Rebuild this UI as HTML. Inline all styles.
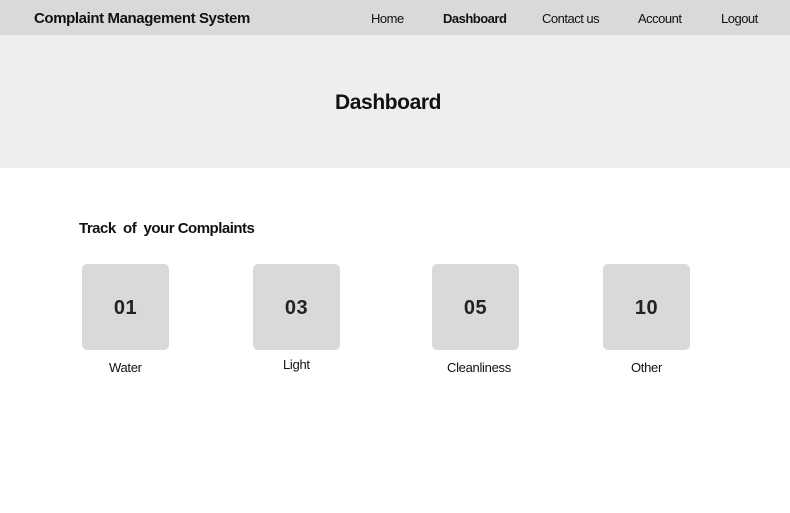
<!DOCTYPE html>
<html><head><style>
*{margin:0;padding:0;box-sizing:border-box}
body{width:790px;height:513px;background:#fff;font-family:"Liberation Sans",sans-serif;color:#111;position:relative;overflow:hidden}
.a{position:absolute;white-space:nowrap}
.hdr{position:absolute;left:0;top:0;width:790px;height:35px;background:#d9d9d9}
.hero{position:absolute;left:0;top:35px;width:790px;height:133px;background:#eeeeee}
.nav{font-size:13px;top:11px;letter-spacing:-0.5px}
.box{position:absolute;top:264px;width:87px;height:86px;background:#d9d9d9;border-radius:5px;font-size:20px;font-weight:bold;text-align:center;line-height:88px;letter-spacing:0.5px;color:#222}
.lbl{font-size:13px;letter-spacing:-0.3px;top:360px}
</style></head><body>
<div class="hdr"></div>
<div class="hero"></div>
<div class="a" style="left:34px;top:10px;font-size:15px;font-weight:bold;letter-spacing:-0.4px">Complaint Management System</div>
<div class="a nav" style="left:371px">Home</div>
<div class="a nav" style="left:443px;font-weight:bold">Dashboard</div>
<div class="a nav" style="left:542px">Contact us</div>
<div class="a nav" style="left:638px">Account</div>
<div class="a nav" style="left:721px">Logout</div>
<div class="a" style="left:335px;top:91px;font-size:21px;font-weight:bold;letter-spacing:-0.4px">Dashboard</div>
<div class="a" style="left:79px;top:220px;font-size:15px;font-weight:bold;letter-spacing:-0.5px">Track&nbsp; of&nbsp; your Complaints</div>
<div class="box" style="left:82px">01</div>
<div class="box" style="left:253px">03</div>
<div class="box" style="left:432px">05</div>
<div class="box" style="left:603px">10</div>
<div class="a lbl" style="left:109px">Water</div>
<div class="a lbl" style="left:283px;top:357px">Light</div>
<div class="a lbl" style="left:447px">Cleanliness</div>
<div class="a lbl" style="left:631px">Other</div>
</body></html>
